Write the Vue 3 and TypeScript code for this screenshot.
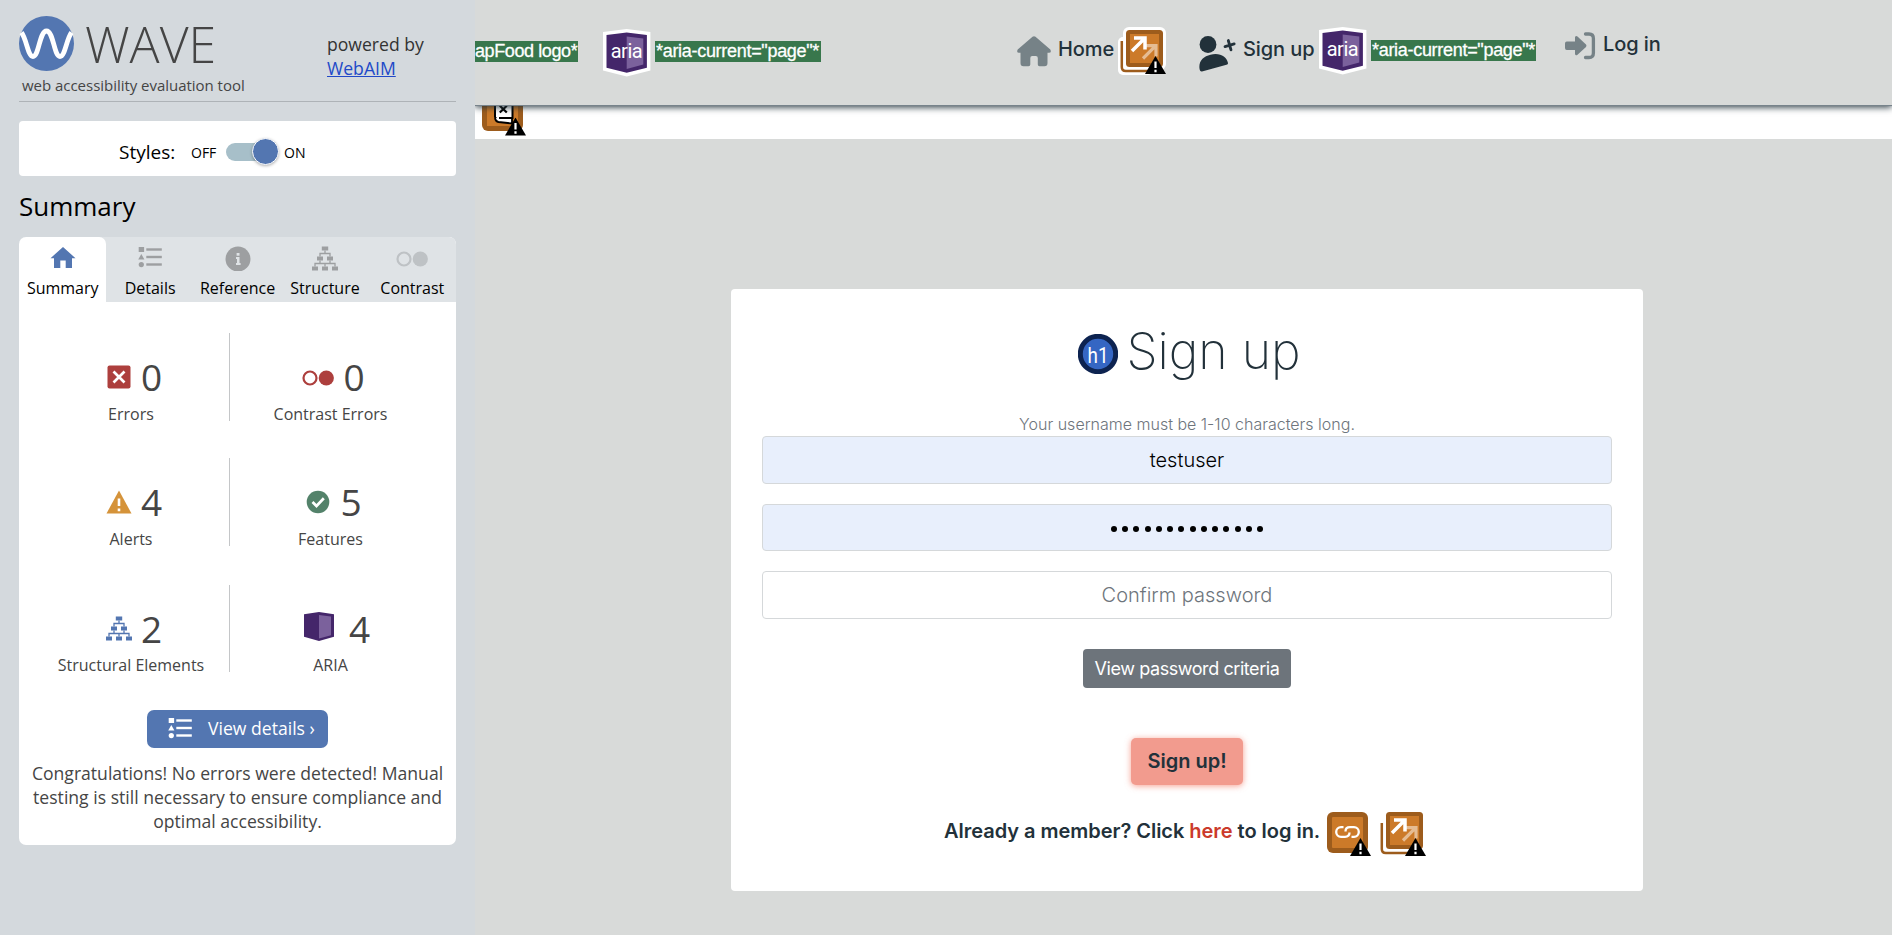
<script setup lang="ts">
interface Tab {
  label: string
  icon: string
  active?: boolean
}
interface Stat {
  label: string
  count: number
  icon: string
  kind: string
}

const tabs: Tab[] = [
  { label: 'Summary', icon: 'home-solid', active: true },
  { label: 'Details', icon: 'list' },
  { label: 'Reference', icon: 'info' },
  { label: 'Structure', icon: 'tree' },
  { label: 'Contrast', icon: 'contrast' },
]

const statRows: Stat[][] = [
  [
    { label: 'Errors', count: 0, icon: 'error', kind: 'error' },
    { label: 'Contrast Errors', count: 0, icon: 'contrast', kind: 'contrast' },
  ],
  [
    { label: 'Alerts', count: 4, icon: 'alert', kind: 'alert' },
    { label: 'Features', count: 5, icon: 'feature', kind: 'feature' },
  ],
  [
    { label: 'Structural Elements', count: 2, icon: 'tree', kind: 'structure' },
    { label: 'ARIA', count: 4, icon: 'aria-box', kind: 'aria' },
  ],
]

const passwordLength = 14
</script>

<template>
  <div class="app">
    <svg class="defs" width="0" height="0" aria-hidden="true">
      <symbol id="home-solid" viewBox="0 0 26 26">
        <path d="M13 2 L25.5 13.2 H22 V23 H15.7 V15.5 H10.3 V23 H4 V13.2 H.5 Z" fill="currentColor" />
      </symbol>
      <symbol id="list" viewBox="0 0 26 26">
        <g fill="currentColor">
          <rect x="1.7" y="2" width="5.4" height="5" />
          <path d="M4.3 9 L7.4 14.5 H1.2 Z" />
          <circle cx="4.3" cy="19.6" r="2.6" />
          <rect x="9.3" y="3.3" width="15.5" height="2.4" />
          <rect x="9.3" y="10.8" width="15.5" height="2.4" />
          <rect x="9.3" y="18.3" width="15.5" height="2.4" />
        </g>
      </symbol>
      <symbol id="info" viewBox="0 0 26 26">
        <circle cx="13" cy="14.3" r="12.5" fill="currentColor" transform="translate(0 -.3)" />
        <g fill="#dfe3e6">
          <rect x="11.6" y="8" width="2.900" height="2.700" />
          <path d="M11 12 H14.500 V18 H15.600 V20 H11 V18 H12 V14 H11 Z" />
        </g>
      </symbol>
      <symbol id="tree" viewBox="0 0 26 26">
        <g fill="currentColor">
          <rect x="9.8" y="1.5" width="6.4" height="4" />
          <rect x="5" y="11.5" width="6" height="4" />
          <rect x="15" y="11.5" width="6" height="4" />
          <rect x="0" y="21.5" width="6" height="4" />
          <rect x="10" y="21.5" width="6" height="4" />
          <rect x="20" y="21.5" width="6" height="4" />
        </g>
        <path d="M13 5.500V8.500M8 11.500V8.500H18V11.500M8 15.500V18.500M18 15.500V18.500M3 21.500V18.500H23V21.500M13 18.500V21.500" fill="none" stroke="currentColor" stroke-width="1.3" />
      </symbol>
      <symbol id="contrast" viewBox="0 0 32 26">
        <circle cx="8" cy="14" r="6.500" fill="none" stroke="currentColor" stroke-width="2.200" />
        <circle cx="24.300" cy="14" r="7.600" fill="currentColor" />
      </symbol>
      <symbol id="error" viewBox="0 0 26 26">
        <rect x="1.500" y="1.500" width="23" height="23" rx="2" fill="currentColor" />
        <path d="M7.500 7.500 L18.500 18.500 M18.500 7.500 L7.500 18.500" stroke="#fff" stroke-width="2.700" />
      </symbol>
      <symbol id="alert" viewBox="0 0 26 26">
        <path d="M13 1.500 L25.500 24.500 H.5 Z" fill="currentColor" />
        <path d="M13 9.500 V17 M13 19.500 V22.300" stroke="#fff" stroke-width="2.600" />
      </symbol>
      <symbol id="feature" viewBox="0 0 26 26">
        <circle cx="13" cy="13" r="11.300" fill="currentColor" />
        <path d="M7.500 13 L11.500 17 L18.800 9.300" fill="none" stroke="#fff" stroke-width="2.700" />
      </symbol>
      <symbol id="aria-box" viewBox="0 0 30 30">
        <path d="M0 2.200 L15 0 L30 2.200 V24.800 L15 29 L0 24.800 Z" fill="#44266a" />
        <path d="M15 3 L27 4.500 V23.300 L15 26.400 Z" fill="#7b619c" />
      </symbol>
      <symbol id="warn-triangle" viewBox="0 0 22 19">
        <path d="M11 0 L21.500 18 H.5 Z" fill="#000" />
        <path d="M11 5.500 V12 M11 13.800 V16.200" stroke="#fff" stroke-width="2.200" />
      </symbol>
      <symbol id="aria-tag" viewBox="0 0 48 48">
        <path d="M0 3 L23.700 0 L47.400 3 V41.500 L23.700 47.500 L0 41.500 Z" fill="#fff" />
        <path d="M3.500 6 L23.700 3.500 L43.900 6 V38.700 L23.700 43.700 L3.500 38.700 Z" fill="#44266a" />
        <path d="M23.700 7.500 L40.300 9.500 V35.500 L23.700 40 Z" fill="#7b619c" />
        <text x="23.700" y="28.500" text-anchor="middle" textLength="32" font-family="Roboto, sans-serif" font-size="20" font-weight="400" fill="#fff">aria</text>
      </symbol>
      <symbol id="arrow-tag" viewBox="0 0 48 48">
        <rect x="0" y="10" width="35" height="38" rx="5" fill="#fff" />
        <rect x="5" y="0" width="43" height="43" rx="6" fill="#fff" />
        <path d="M3.800 14 V40 Q3.800 44 7.800 44 H32" fill="none" stroke="#9d5c1c" stroke-width="2.500" />
        <rect x="7" y="2" width="39" height="39" rx="4" fill="#fff" />
        <rect x="8" y="3" width="37" height="37" rx="3.500" fill="#9d5c1c" />
        <rect x="12" y="7" width="29" height="29" fill="#cc7a29" />
        <path d="M25 31.500 L37.300 19.200 M27.500 18.700 H38 V29.500" fill="none" stroke="#e5bc93" stroke-width="3.200" />
        <path d="M14 24 L26.500 11.500 M16 11 H27 V22.500" fill="none" stroke="#fff" stroke-width="3.500" />
        <use href="#warn-triangle" x="26.500" y="29" width="22" height="19" />
      </symbol>
      <symbol id="link-tag" viewBox="0 0 48 48">
        <rect x="3" y="3" width="41" height="41" rx="6" fill="#9d5c1c" />
        <rect x="8" y="8" width="31" height="31" rx="1" fill="#cc7a29" />
        <path d="M19.500 18.200 H17 A4.800 4.800 0 0 0 17 27.800 H21 Q25.500 27.800 25.500 23.500 M27.500 27.800 H30 A4.800 4.800 0 0 0 30 18.200 H26 Q21.500 18.200 21.500 22.500" fill="none" stroke="#fff" stroke-width="2.300" />
        <use href="#warn-triangle" x="25.500" y="29" width="22" height="19" />
      </symbol>
      <symbol id="page-tag" viewBox="0 0 48 50">
        <rect x="3" y="3" width="41" height="41" rx="6" fill="#9d5c1c" />
        <rect x="8" y="8" width="31" height="31" fill="#cc7a29" />
        <path d="M16 8 H33.500 V31 L18 32.500 L16 30 Z" fill="#fff" stroke="#000" stroke-width="2" />
        <path d="M16 31 Q16.500 34.500 19.500 35 L33 36.500 V31 H20" fill="#fff" stroke="#000" stroke-width="1.800" />
        <path d="M20.800 18.700 L27.800 25.500 M27.800 18.700 L20.800 25.500" stroke="#000" stroke-width="2.200" />
        <use href="#warn-triangle" x="25.500" y="30.500" width="22" height="19" />
      </symbol>
    </svg>

    <aside class="sidebar">
      <header class="brand">
        <div class="brand-left">
          <div class="brand-mark">
            <svg class="wave-logo" viewBox="0 0 55 55">
              <circle cx="27.500" cy="27.500" r="27.500" fill="#5376b1" />
              <path d="M2.500 16.500 C7.500 23 9 40.500 14 40.500 C20 40.500 20.500 15 27.500 15 C34.500 15 35 40.500 41 40.500 C46 40.500 47.500 23 52.500 16.500" fill="none" stroke="#fff" stroke-width="4.800" />
            </svg>
            <span class="wordmark">WAVE</span>
          </div>
          <div class="tagline">web accessibility evaluation tool</div>
        </div>
        <div class="powered">powered by<br /><a href="#">WebAIM</a></div>
      </header>

      <section class="styles-box">
        <span class="styles-label">Styles:</span>
        <span class="switch-text off">OFF</span>
        <span class="switch"><span class="knob"></span></span>
        <span class="switch-text on">ON</span>
      </section>

      <h2 class="section-title">Summary</h2>

      <section class="panel">
        <nav class="tabs">
          <div v-for="tab in tabs" :key="tab.label" class="tab" :class="[tab.icon, { active: tab.active }]">
            <svg class="tab-icon"><use :href="'#' + tab.icon" /></svg>
            <span>{{ tab.label }}</span>
          </div>
        </nav>
        <div class="stats">
          <div v-for="(row, i) in statRows" :key="i" class="stat-row">
            <div v-for="stat in row" :key="stat.label" class="stat" :class="stat.kind">
              <div class="stat-top">
                <svg class="stat-icon"><use :href="'#' + stat.icon" /></svg>
                <span class="count">{{ stat.count }}</span>
              </div>
              <div class="stat-label">{{ stat.label }}</div>
            </div>
          </div>
        </div>
        <button class="details-btn">
          <svg><use href="#list" /></svg>
          <span>View details ›</span>
        </button>
        <p class="congrats">
          Congratulations! No errors were detected! Manual<br />
          testing is still necessary to ensure compliance and<br />
          optimal accessibility.
        </p>
      </section>
    </aside>

    <main class="page">
      <header class="navbar">
        <span class="alt-text logo-alt">apFood logo*</span>
        <svg class="tag brand-aria"><use href="#aria-tag" /></svg>
        <span class="alt-text current-brand">*aria-current="page"*</span>
        <a class="nav-item home">
          <svg viewBox="0 0 34 31" width="34" height="31">
            <path d="M15.500 .8 Q17 -.4 18.500 .8 L33.300 13.500 Q34.800 16.800 32 16.800 H30.500 V27 Q30.500 30.300 27.500 30.300 H22.500 Q20.800 30.300 20.800 28.500 V22 Q20.800 20 18.800 20 H15.200 Q13.300 20 13.300 22 V28.500 Q13.300 30.300 11.500 30.300 H6.500 Q3.500 30.300 3.500 27 V16.800 H2 Q-.8 16.800 .7 13.500 Z" fill="#768287" />
          </svg>
          <span>Home</span>
        </a>
        <svg class="tag home-alert"><use href="#arrow-tag" /></svg>
        <a class="nav-item join">
          <svg viewBox="0 0 37 36" width="37" height="36">
            <circle cx="9" cy="8.500" r="8.400" fill="#22313a" />
            <path d="M.5 32.500 C-.5 25 4.500 20.300 11.500 18.700 C21 16.500 27.500 20.500 29 27 Q29.200 28.300 27.500 28.800 L3 35.500 Q.8 35.800 .5 32.500 Z" fill="#22313a" />
            <path d="M29.300 4.500 L32 13.800 M26 10.600 L35.200 7.900" stroke="#22313a" stroke-width="2.800" stroke-linecap="round" />
          </svg>
          <span>Sign up</span>
        </a>
        <svg class="tag join-aria"><use href="#aria-tag" /></svg>
        <span class="alt-text current-join">*aria-current="page"*</span>
        <a class="nav-item login">
          <svg viewBox="0 0 31 28" width="31" height="28">
            <path d="M1.800 9.500 H10 V5.500 Q10.500 3.300 12.500 4.500 L21 12.500 Q22 13.800 21 15 L12.500 22.800 Q10.500 24.200 10 22 V18 H1.800 Q0 18 0 16 V11.500 Q0 9.500 1.800 9.500 Z" fill="#768287" />
            <path d="M20.500 2 H24 Q28.400 2 28.400 6.500 V21 Q28.400 25.500 24 25.500 H20.500" fill="none" stroke="#768287" stroke-width="3.300" stroke-linecap="round" />
          </svg>
          <span>Log in</span>
        </a>
      </header>
      <div class="strip">
        <svg class="page-alert"><use href="#page-tag" /></svg>
      </div>

      <section class="card">
        <h1 class="title">
          <svg class="h1-tag" viewBox="0 0 40 40">
            <circle cx="20" cy="20" r="17.700" fill="#3566c3" stroke="#0d2350" stroke-width="5" />
            <text x="20" y="28.700" text-anchor="middle" textLength="21" lengthAdjust="spacingAndGlyphs" font-family="Roboto, sans-serif" font-size="22" font-weight="400" fill="#fff">h1</text>
          </svg>
          <span>Sign up</span>
        </h1>
        <p class="hint">Your username must be 1-10 characters long.</p>
        <div class="field filled"><span>testuser</span></div>
        <div class="field filled dots"><i v-for="n in passwordLength" :key="n"></i></div>
        <div class="field empty"><span>Confirm password</span></div>
        <button class="criteria"><span>View password criteria</span></button>
        <button class="submit"><span>Sign up!</span></button>
        <div class="member">
          <span class="member-text">Already a member? Click <a>here</a> to log in.</span>
          <svg class="tag link-alert"><use href="#link-tag" /></svg>
          <svg class="tag"><use href="#arrow-tag" /></svg>
        </div>
      </section>
    </main>
  </div>
</template>

<style>
body {
  margin: 0;
  overflow: hidden;
}
</style>

<style scoped>
.app {
  display: flex;
  width: 1892px;
  height: 935px;
  overflow: hidden;
}
.defs {
  position: absolute;
}
svg {
  display: block;
  flex: none;
}
button {
  border: 0;
  padding: 0;
  font: inherit;
}

/* ---------- sidebar ---------- */
.sidebar {
  box-sizing: border-box;
  width: 475px;
  flex: none;
  padding: 16px 19px 0;
  background: #d4d9dd;
  font-family: 'Open Sans', sans-serif;
  color: #000;
}
.brand {
  display: flex;
  justify-content: space-between;
  height: 84px;
  padding-bottom: 1px;
  border-bottom: 1px solid #aeb3b7;
  color: #454545;
}
.brand-mark {
  display: flex;
  height: 55px;
}
.wave-logo {
  width: 55px;
  height: 55px;
}
.wordmark {
  margin: 2px 0 0 11px;
  font-size: 50px;
  line-height: 52px;
  font-weight: 300;
}
.tagline {
  margin: 4px 0 0 3px;
  font-size: 15px;
  line-height: 20px;
  letter-spacing: -0.03px;
}
.powered {
  width: 129px;
  margin: 16px 0 0;
  font-size: 17.6px;
  line-height: 24px;
  color: #333;
  white-space: nowrap;
}
.powered a {
  color: #2149c8;
}
.styles-box {
  display: flex;
  align-items: center;
  height: 55px;
  margin-top: 19px;
  border-radius: 4px;
  background: #fff;
}
.styles-label {
  width: 72px;
  margin: 6px 0 0 100px;
  font-size: 19px;
}
.switch-text {
  margin-top: 8px;
  font-size: 14px;
}
.off {
  width: 35px;
}
.switch {
  position: relative;
  width: 48px;
  height: 18px;
  margin-top: 7px;
  border-radius: 9px;
  background: #a7bfc9;
}
.knob {
  position: absolute;
  top: -5px;
  right: -5px;
  width: 25px;
  height: 25px;
  border: 1px solid #fff;
  border-radius: 50%;
  background: #5376b1;
  box-shadow: 0 1px 3px rgba(0, 0, 0, 0.3);
}
.on {
  margin-left: 10px;
}
.section-title {
  margin: 12px 0 0;
  font-size: 26px;
  line-height: 36px;
  font-weight: 400;
}
.panel {
  height: 608px;
  margin-top: 13px;
  border-radius: 7px;
  background: #fff;
  overflow: hidden;
}
.tabs {
  display: flex;
  height: 65px;
  background: #dfe3e6;
}
.tab {
  display: flex;
  flex: 1 1 0;
  flex-direction: column;
  align-items: center;
  color: #9d9fa1;
}
.tab span {
  margin-top: 5px;
  font-size: 16px;
  line-height: 24px;
  color: #000;
  white-space: nowrap;
}
.tab.active {
  border-radius: 7px 7px 0 0;
  background: #fff;
  color: #5376b1;
}
.tab-icon {
  width: 26px;
  height: 26px;
  margin-top: 8px;
}
.tab.contrast {
  color: #bec2c5;
}
.tab.contrast .tab-icon {
  width: 32px;
}
.stats {
  padding: 31px 0 0 12px;
}
.stat-row {
  display: flex;
  height: 88px;
  margin-bottom: 37px;
}
.stat-row:nth-child(2) {
  margin-bottom: 39px;
}
.stat-row:last-child {
  height: 87px;
}
.stat-row:last-child .stat-top {
  height: 67px;
}
.stat {
  box-sizing: border-box;
  width: 199px;
  padding-left: 2px;
}
.stat:first-child {
  border-right: 1px solid #c4c6c8;
}
.stat-top {
  display: flex;
  align-items: center;
  justify-content: center;
  height: 68px;
  padding: 8px 0 0 6px;
  box-sizing: border-box;
  gap: 9px;
}
.stat-icon {
  width: 26px;
  height: 26px;
}
.count {
  margin-top: 12px;
  font-size: 37px;
  line-height: 50px;
  color: #454545;
}
.stat-icon {
  margin-top: 11px;
}
.stat-label {
  margin-top: 1px;
  font-size: 16px;
  line-height: 24px;
  text-align: center;
  color: #454545;
}
.error .stat-icon,
.contrast .stat-icon {
  color: #ad3f3d;
}
.contrast .stat-icon {
  width: 32px;
}
.alert .stat-icon {
  color: #d5933a;
}
.feature .stat-icon {
  color: #53826a;
}
.structure .stat-icon {
  color: #5376b1;
}
.aria .stat-icon {
  width: 30px;
  height: 30px;
  margin-top: 9px;
}
.aria .stat-top {
  gap: 15px;
  padding-left: 13px;
}
.details-btn {
  display: flex;
  width: 181px;
  height: 38px;
  margin: 38px auto 0;
  border-radius: 7px;
  background: #5376b1;
  color: #fff;
}
.details-btn svg {
  width: 26px;
  height: 26px;
  margin: 6px 0 0 20px;
}
.details-btn span {
  margin: 6px 0 0 15px;
  font-size: 17.6px;
  line-height: 24px;
  white-space: nowrap;
}
.congrats {
  margin: 13px 0 0;
  font-size: 17.6px;
  line-height: 24px;
  text-align: center;
  white-space: nowrap;
  color: #454545;
}

/* ---------- evaluated page ---------- */
.page {
  flex: 1;
  background: #d8dad9;
  font-family: Inter, sans-serif;
  color: #22313a;
}
.navbar {
  position: relative;
  z-index: 1;
  display: flex;
  align-items: flex-start;
  height: 105px;
  background: #d8dad9;
  box-shadow: 0 1px 0 #77838b, 0 2px 7px #22313a;
  clip-path: inset(0 0 -20px 0);
}
.alt-text {
  box-sizing: border-box;
  height: 21px;
  background: #38774c;
  color: #fff;
  font-family: 'Liberation Sans', sans-serif;
  font-size: 18px;
  line-height: 20px;
  letter-spacing: -0.4px;
  white-space: nowrap;
  -webkit-text-stroke: 0.3px #fff;
}
.logo-alt {
  width: 103px;
  margin-top: 41px;
}
.tag {
  width: 48px;
  height: 48px;
}
.brand-aria {
  margin: 29px 0 0 25px;
}
.current-brand {
  width: 166px;
  margin: 41px 0 0 4px;
  padding-left: 1px;
  letter-spacing: -0.3px;
}
.nav-item {
  display: flex;
  font-size: 20px;
  line-height: 24px;
  font-weight: 500;
  letter-spacing: -0.1px;
  white-space: nowrap;
}
.home {
  width: 101px;
  margin: 36px 0 0 196px;
}
.home span {
  margin: 1px 0 0 7px;
}
.home-alert {
  margin-top: 27px;
}
.join {
  width: 120px;
  margin: 36px 0 0 33px;
}
.join span {
  margin: 1px 0 0 7px;
}
.join-aria {
  margin-top: 27px;
}
.current-join {
  width: 165px;
  margin: 40px 0 0 4px;
  padding-left: 1px;
  letter-spacing: -0.3px;
}
.login {
  margin: 32px 0 0 29px;
}
.login span {
  margin-left: 7px;
}
.strip {
  position: relative;
  height: 34px;
  background: #fff;
}
.page-alert {
  position: absolute;
  left: 4px;
  top: -18px;
  width: 48px;
  height: 50px;
}
.card {
  box-sizing: border-box;
  width: 912px;
  height: 602px;
  margin: 150px 0 0 256px;
  padding: 31px;
  border-radius: 4px;
  background: #fff;
}
.title {
  display: flex;
  justify-content: center;
  margin: 0;
  height: 92px;
  padding-left: 5px;
  font-size: 50px;
  line-height: 62px;
  font-weight: 250;
}
.h1-tag {
  width: 40px;
  height: 40px;
  margin: 14px 8px 0 0;
}
.hint {
  margin: 0;
  height: 24px;
  font-size: 16px;
  line-height: 24px;
  font-weight: 300;
  text-align: center;
  color: #6e757c;
}
.field {
  box-sizing: border-box;
  display: flex;
  align-items: center;
  justify-content: center;
  height: 48px;
  margin-bottom: 20px;
  border: 1px solid #d5d8da;
  border-radius: 4px;
  font-size: 20px;
  font-weight: 300;
  color: #000;
}
.filled {
  background: #e8effc;
}
.dots {
  height: 47px;
  gap: 5.270px;
}
.dots i {
  width: 6px;
  height: 6px;
  margin-top: 3px;
  border-radius: 50%;
  background: #000;
}
.empty {
  color: #6e757c;
}
.criteria,
.submit {
  display: block;
  margin: 0 auto;
  border-radius: 4px;
  white-space: nowrap;
}
.criteria {
  width: 208px;
  height: 39px;
  margin-top: 30px;
  padding-bottom: 1px;
  background: #6d747b;
  color: #fff;
  font-size: 18px;
  letter-spacing: -0.43px;
}
.submit {
  width: 112px;
  height: 47px;
  margin-top: 50px;
  padding-bottom: 2px;
  border-radius: 5px;
  background: #f29b8e;
  box-shadow: 0 1px 6px rgba(242, 120, 100, 0.7);
  color: #22313a;
  font-size: 20px;
  font-weight: 600;
}
.member {
  display: flex;
  margin: 24px 0 0 182px;
  font-size: 20px;
  line-height: 24px;
  font-weight: 600;
}
.member-text {
  width: 380px;
  padding-top: 10px;
  letter-spacing: -0.03px;
  white-space: nowrap;
}
.member a {
  color: #cb3a2b;
}
.link-alert {
  margin-right: 6px;
}
</style>
